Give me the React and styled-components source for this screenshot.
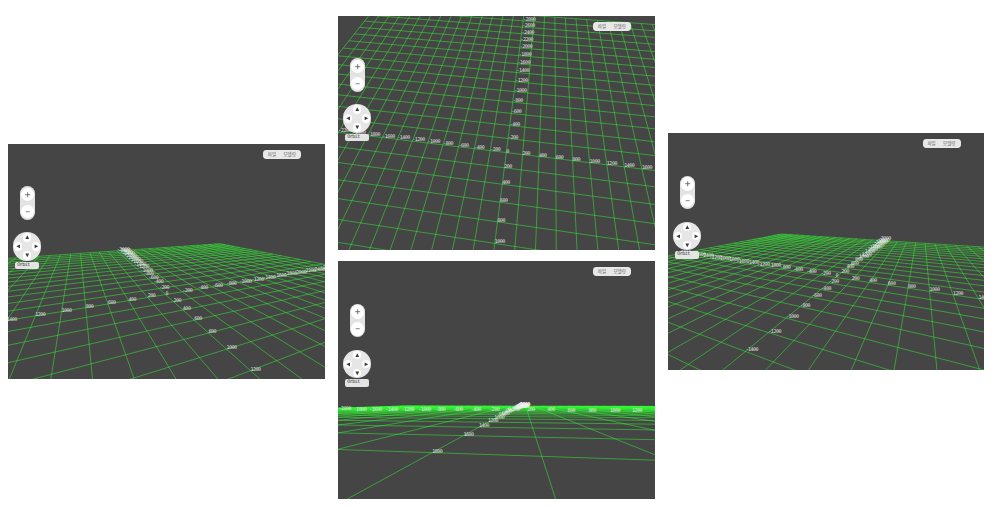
import React from 'react';
import styled, { createGlobalStyle } from 'styled-components';

const Global = createGlobalStyle`
  body { margin: 0; background: #fff; overflow: hidden; }
`;

const Page = styled.main`
  display: flex;
  gap: 13px;
  width: 995px;
  height: 509px;
  box-sizing: border-box;
  padding: 16px 11px 10px 8px;
`;

const Column = styled.section`
  display: flex;
  flex-direction: column;
  gap: 11px;
  padding-top: ${(p) => p.$offset}px;
`;

const Panel = styled.article`
  position: relative;
  width: ${(p) => p.$w}px;
  height: ${(p) => p.$h}px;
  overflow: hidden;
  background: #454545;
`;

const Scene = styled.svg`
  display: block;
  width: 100%;
  height: 100%;
`;

const GridLine = styled.line`
  stroke: #33ff33;
  stroke-width: 1;
  stroke-opacity: 0.47;
`;

const AxisLabel = styled.text`
  font: 5px 'DejaVu Sans Mono', monospace;
  letter-spacing: -0.5px;
  text-rendering: geometricPrecision;
  fill: #f0f0f0;
  fill-opacity: 0.92;
`;

const Controls = styled.div`
  position: absolute;
  left: 5px;
  top: ${(p) => p.$top}px;
  width: 28.4px;
  display: flex;
  flex-direction: column;
  align-items: center;
`;

const ZoomPill = styled.div`
  display: flex;
  flex-direction: column;
  justify-content: space-between;
  align-items: center;
  box-sizing: border-box;
  width: 15.6px;
  height: 33.4px;
  margin-left: 0.8px;
  padding: 1.6px 0;
  border-radius: 8px;
  background: #e3e3e3;
`;

const RoundButton = styled.button`
  display: block;
  width: ${(p) => p.$size}px;
  height: ${(p) => p.$size}px;
  padding: 0;
  border: 0;
  border-radius: 50%;
  background: #fff;
`;

const Glyph = styled.svg`
  display: block;
  width: 100%;
  height: 100%;
`;

const Wheel = styled.div`
  display: grid;
  grid-template-columns: repeat(3, 9px);
  grid-template-rows: repeat(3, 9px);
  place-content: center;
  place-items: center;
  width: 28.4px;
  height: 28.4px;
  margin-top: 12.7px;
  border-radius: 50%;
  background: #e6e6e6;
`;

const Spoke = styled.div`
  grid-area: ${(p) => p.$area};
`;

const ModeField = styled.div`
  width: 24px;
  height: 7.6px;
  box-sizing: border-box;
  margin-top: 1px;
  padding-left: 2px;
  border-radius: 2px;
  background: #e4e4e4;
  color: #333;
  font: 5px/6.8px 'DejaVu Sans Mono', monospace;
  letter-spacing: -0.5px;
  text-rendering: geometricPrecision;
`;

const Menu = styled.nav`
  position: absolute;
  left: ${(p) => p.$left}px;
  top: 6.3px;
  display: flex;
  gap: 7.4px;
  box-sizing: border-box;
  width: 38px;
  height: 8.8px;
  padding-left: 4.8px;
  border-radius: 3.4px;
  background: #e8e8e8;
`;

const MenuItem = styled.span`
  color: #5c5c5c;
  white-space: nowrap;
  font: 4.5px/8.6px 'Noto Sans CJK KR', sans-serif;
`;

// Ground-plane projections: row-major 3x3 matrices, one grid unit = 200.
const VIEWS = {
  left: {
    w: 317, h: 235, menu: 255, sign: 1,
    m: [-22.64829, -5.61365, 157.59864, -2.36065, -5.79312, 150.56016, -0.0344, -0.08149],
  },
  top: {
    w: 317, h: 234, menu: 255, sign: 1,
    m: [15.26106, -8.48245, 168.29366, 1.20092, 9.21716, 136.57509, -0.00558, -0.03936],
  },
  front: {
    w: 317, h: 238, menu: 255, sign: 1,
    m: [16.95539, -17.02248, 169.98248, -1.80404, -12.90738, 150.30301, -0.01261, -0.09132],
  },
  right: {
    w: 316, h: 237, menu: 254.6, sign: -1,
    m: [10.14556, -18.54054, 167.60511, -2.43668, -5.38391, 144.40295, -0.03308, -0.07307],
  },
};

const EXTENT = 15;
const NEAR = 0.02;
const STEPS = Array.from({ length: EXTENT * 2 + 1 }, (_, i) => i - EXTENT);

const depth = (m, u, v) => m[6] * u + m[7] * v + 1;

function project(m, u, v) {
  const w = depth(m, u, v);
  return [(m[0] * u + m[1] * v + m[2]) / w, (m[3] * u + m[4] * v + m[5]) / w];
}

function segment(m, a, b) {
  const wa = depth(m, ...a);
  const wb = depth(m, ...b);
  if (wa < NEAR && wb < NEAR) return null;
  const cut = (p, q, wp, wq) => {
    const t = (NEAR - wp) / (wq - wp);
    return [p[0] + t * (q[0] - p[0]), p[1] + t * (q[1] - p[1])];
  };
  const start = wa < NEAR ? cut(a, b, wa, wb) : a;
  const end = wb < NEAR ? cut(b, a, wb, wa) : b;
  return [project(m, ...start), project(m, ...end)];
}

function Ground({ view }) {
  const { m, w, h, sign } = view;
  const lines = STEPS.flatMap((k) => [
    segment(m, [k, -EXTENT], [k, EXTENT]),
    segment(m, [-EXTENT, k], [EXTENT, k]),
  ]).filter(Boolean);
  const labels = STEPS.flatMap((k) => [
    { u: k, v: 0, text: k * 200 },
    ...(k === 0 ? [] : [{ u: 0, v: k, text: k * 200 * sign }]),
  ])
    .filter(({ u, v }) => depth(m, u, v) > NEAR)
    .map((l) => ({ ...l, at: project(m, l.u, l.v) }))
    .filter(({ at: [x, y] }) => x > -9 && x < w - 1 && y > 2 && y < h + 2);
  return (
    <Scene viewBox={`0 0 ${w} ${h}`}>
      {lines.map(([a, b], i) => (
        <GridLine key={i} x1={a[0]} y1={a[1]} x2={b[0]} y2={b[1]} />
      ))}
      {labels.map(({ u, v, text, at }) => (
        <AxisLabel key={`${u},${v}`} x={at[0]} y={at[1]}>{text}</AxisLabel>
      ))}
    </Scene>
  );
}

function Arrow({ area, points }) {
  return (
    <Spoke $area={area}>
      <RoundButton $size={8.6}>
        <Glyph viewBox="0 0 8.6 8.6"><polygon points={points} fill="#3c3c3c" /></Glyph>
      </RoundButton>
    </Spoke>
  );
}

function Viewport({ view }) {
  return (
    <Panel $w={view.w} $h={view.h}>
      <Ground view={view} />
      <Controls $top={(42.3 * view.h) / 235}>
        <ZoomPill>
          <RoundButton $size={13.4}>
            <Glyph viewBox="0 0 13.4 13.4"><path d="M4.2 6.7h5M6.7 4.2v5" stroke="#555" strokeWidth="0.8" /></Glyph>
          </RoundButton>
          <RoundButton $size={13.4}>
            <Glyph viewBox="0 0 13.4 13.4"><path d="M4.7 6.7h4" stroke="#666" strokeWidth="0.8" /></Glyph>
          </RoundButton>
        </ZoomPill>
        <Wheel>
          <Arrow area="1 / 2" points="4.3,2.3 6.2,6 2.4,6" />
          <Arrow area="2 / 1" points="2.3,4.3 6,2.4 6,6.2" />
          <Arrow area="2 / 3" points="6.3,4.3 2.6,2.4 2.6,6.2" />
          <Arrow area="3 / 2" points="4.3,6.3 6.2,2.6 2.4,2.6" />
        </Wheel>
        <ModeField>Orbit</ModeField>
      </Controls>
      <Menu $left={view.menu}>
        <MenuItem>파일</MenuItem>
        <MenuItem>모델링</MenuItem>
      </Menu>
    </Panel>
  );
}

export default function App() {
  return (
    <>
      <Global />
      <Page>
        <Column $offset={128}>
          <Viewport view={VIEWS.left} />
        </Column>
        <Column $offset={0}>
          <Viewport view={VIEWS.top} />
          <Viewport view={VIEWS.front} />
        </Column>
        <Column $offset={117}>
          <Viewport view={VIEWS.right} />
        </Column>
      </Page>
    </>
  );
}
